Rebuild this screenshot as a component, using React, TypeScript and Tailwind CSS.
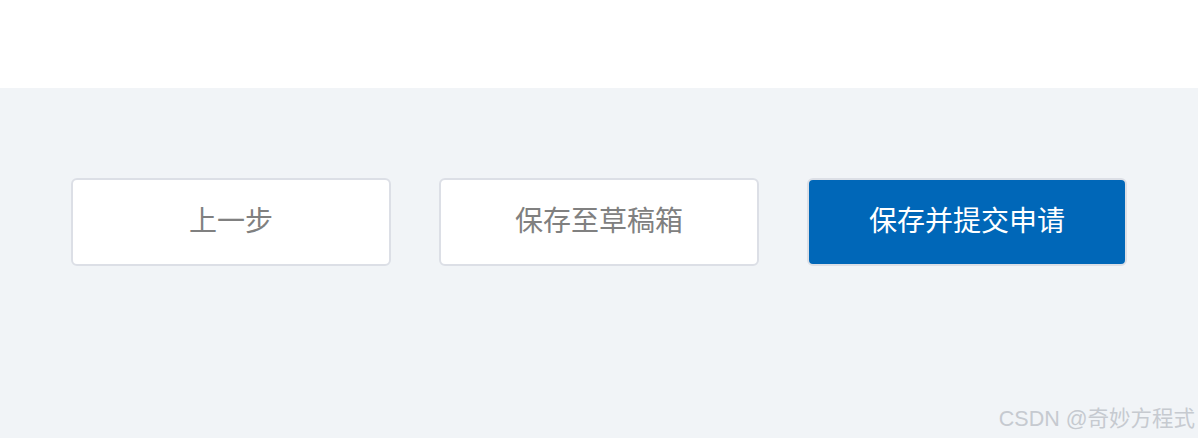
import React from 'react';

const font = { fontFamily: '"Liberation Sans", "Noto Sans CJK SC", sans-serif' };

const App: React.FC = () => {
  return (
    <div className="w-[1198px] h-[438px] flex flex-col overflow-hidden" style={font}>
      <div className="h-[88px] bg-white" />
      <div className="relative flex-1 bg-[#f1f4f7] pt-[90px] pl-[71px]">
        <div className="flex gap-[48px]">
          <button
            type="button"
            className="w-[320px] h-[88px] flex items-center justify-center rounded-[6px] border-2 border-[#dcdfe6] bg-white text-[28px] text-[#808080]"
          >
            上一步
          </button>
          <button
            type="button"
            className="w-[320px] h-[88px] flex items-center justify-center rounded-[6px] border-2 border-[#dcdfe6] bg-white text-[28px] text-[#808080]"
          >
            保存至草稿箱
          </button>
          <button
            type="button"
            className="w-[320px] h-[88px] flex items-center justify-center rounded-[6px] border-2 border-[#dcdfe6] bg-[#0067b8] text-[28px] text-white"
          >
            保存并提交申请
          </button>
        </div>
        <div className="absolute right-[3px] bottom-[8px] text-[21.5px] leading-none text-[#c6cad0]">
          CSDN @奇妙方程式
        </div>
      </div>
    </div>
  );
};

export default App;
